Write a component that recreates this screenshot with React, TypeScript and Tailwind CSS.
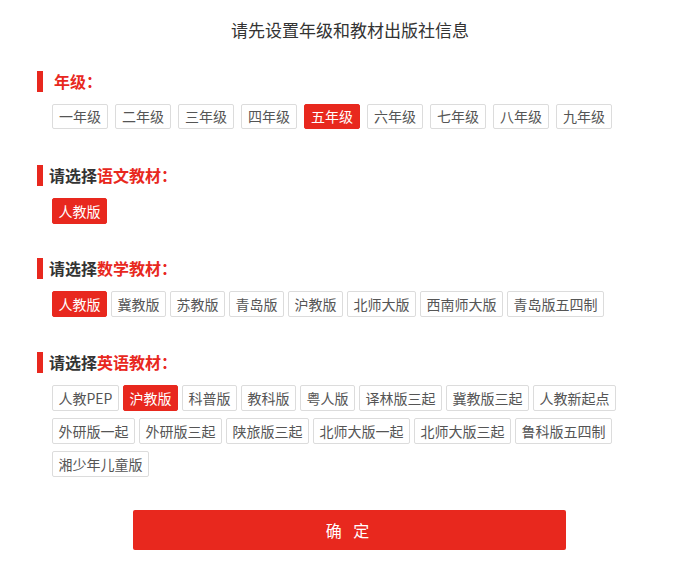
import React, { useState } from "react";

const grades = ["一年级", "二年级", "三年级", "四年级", "五年级", "六年级", "七年级", "八年级", "九年级"];
const chinese = ["人教版"];
const math = ["人教版", "冀教版", "苏教版", "青岛版", "沪教版", "北师大版", "西南师大版", "青岛版五四制"];
const english = [
  "人教PEP", "沪教版", "科普版", "教科版", "粤人版", "译林版三起", "冀教版三起", "人教新起点",
  "外研版一起", "外研版三起", "陕旅版三起", "北师大版一起", "北师大版三起", "鲁科版五四制",
  "湘少年儿童版",
];

const Heading = ({ pre, red, wide }: { pre?: string; red: string; wide?: boolean }) => (
  <div className="flex items-center h-[21px]">
    <span className="w-[6px] h-[21px] bg-[#e8281e]" />
    <span className={`${wide ? "ml-[11px]" : "ml-[6px]"} text-[16px] leading-[21px] font-bold`}>
      {pre && <span className="text-[#333]">{pre}</span>}
      <span className="text-[#e8281e]">{red}</span>
    </span>
  </div>
);

const Options = ({
  items,
  selected,
  onPick,
  grade,
}: {
  items: string[];
  selected: number;
  onPick: (i: number) => void;
  grade?: boolean;
}) => (
  <div className={`flex flex-wrap w-[580px] ml-[15px] ${grade ? "gap-x-[7px]" : "gap-x-[4px]"} gap-y-[7px]`}>
    {items.map((t, i) => (
      <button
        key={t + i}
        onClick={() => onPick(i)}
        className={`${grade ? "h-[25px] leading-[23px] px-[6px]" : "h-[26px] leading-[24px] px-[5.5px]"} text-[14px] border rounded-[2px] whitespace-nowrap ${
          i === selected
            ? "bg-[#e8281e] border-[#e8281e] text-white"
            : "bg-white border-[#dcdcdc] text-[#555]"
        }`}
      >
        {t}
      </button>
    ))}
  </div>
);

export default function App() {
  const [grade, setGrade] = useState(4);
  const [cn, setCn] = useState(0);
  const [ma, setMa] = useState(0);
  const [en, setEn] = useState(1);

  return (
    <div
      className="w-[700px] h-[566px] bg-white pl-[37px]"
      style={{ fontFamily: '"Noto Sans CJK SC", "Noto Sans", sans-serif' }}
    >
      <div className="pt-[19px] pr-[37px] text-center text-[17px] leading-[22px] text-[#333]">
        请先设置年级和教材出版社信息
      </div>

      <div className="mt-[30px]">
        <Heading red="年级：" wide />
        <div className="mt-[12px]">
          <Options items={grades} selected={grade} onPick={setGrade} grade />
        </div>
      </div>

      <div className="mt-[36px]">
        <Heading pre="请选择" red="语文教材：" />
        <div className="mt-[12px]">
          <Options items={chinese} selected={cn} onPick={setCn} />
        </div>
      </div>

      <div className="mt-[34px]">
        <Heading pre="请选择" red="数学教材：" />
        <div className="mt-[12px]">
          <Options items={math} selected={ma} onPick={setMa} />
        </div>
      </div>

      <div className="mt-[35px]">
        <Heading pre="请选择" red="英语教材：" />
        <div className="mt-[12px]">
          <Options items={english} selected={en} onPick={setEn} />
        </div>
      </div>

      <button className="mt-[33px] ml-[96px] w-[433px] h-[40px] bg-[#e8281e] rounded-[2px] text-white text-[16px] tracking-[4px]">
        确 定
      </button>
    </div>
  );
}
